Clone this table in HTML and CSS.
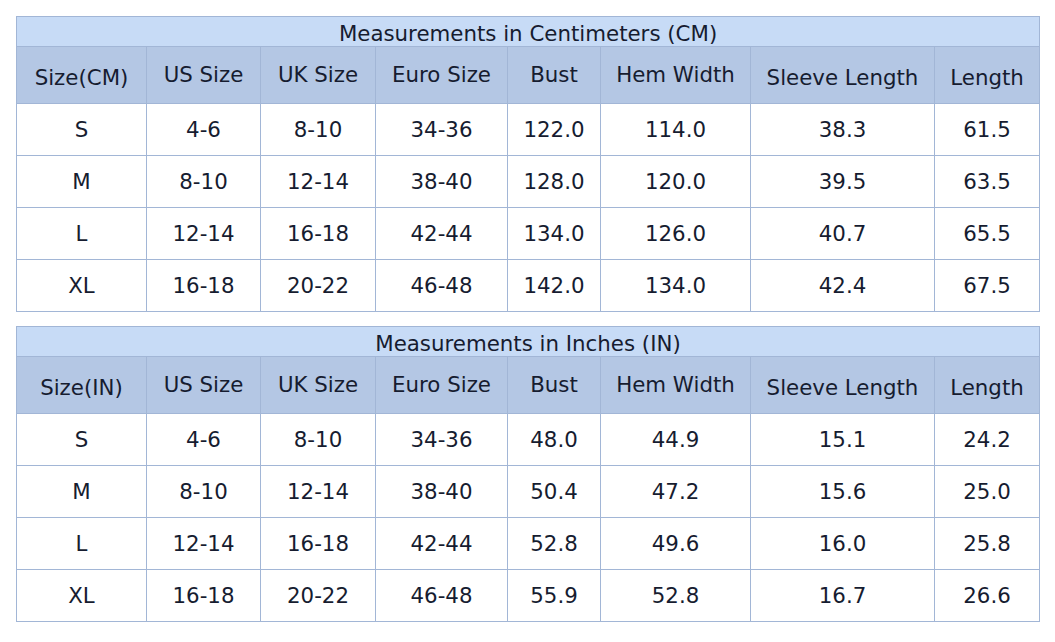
FILE: index.html
```html
<!DOCTYPE html>
<html>
<head>
<meta charset="utf-8">
<link rel="stylesheet" href="styles.css">
</head>
<body>
<table class="size-table">
  <colgroup>
    <col class="c1"><col class="c2"><col class="c3"><col class="c4"><col class="c5"><col class="c6"><col class="c7"><col class="c8">
  </colgroup>
  <tr class="title"><td colspan="8">Measurements in Centimeters (CM)</td></tr>
  <tr class="head">
    <th class="low">Size(CM)</th><th>US Size</th><th>UK Size</th><th>Euro Size</th><th>Bust</th><th>Hem Width</th><th class="low">Sleeve Length</th><th class="low">Length</th>
  </tr>
  <tr><td>S</td><td>4-6</td><td>8-10</td><td>34-36</td><td>122.0</td><td>114.0</td><td>38.3</td><td>61.5</td></tr>
  <tr><td>M</td><td>8-10</td><td>12-14</td><td>38-40</td><td>128.0</td><td>120.0</td><td>39.5</td><td>63.5</td></tr>
  <tr><td>L</td><td>12-14</td><td>16-18</td><td>42-44</td><td>134.0</td><td>126.0</td><td>40.7</td><td>65.5</td></tr>
  <tr><td>XL</td><td>16-18</td><td>20-22</td><td>46-48</td><td>142.0</td><td>134.0</td><td>42.4</td><td>67.5</td></tr>
</table>
<table class="size-table second">
  <colgroup>
    <col class="c1"><col class="c2"><col class="c3"><col class="c4"><col class="c5"><col class="c6"><col class="c7"><col class="c8">
  </colgroup>
  <tr class="title"><td colspan="8">Measurements in Inches (IN)</td></tr>
  <tr class="head">
    <th class="low">Size(IN)</th><th>US Size</th><th>UK Size</th><th>Euro Size</th><th>Bust</th><th>Hem Width</th><th class="low">Sleeve Length</th><th class="low">Length</th>
  </tr>
  <tr><td>S</td><td>4-6</td><td>8-10</td><td>34-36</td><td>48.0</td><td>44.9</td><td>15.1</td><td>24.2</td></tr>
  <tr><td>M</td><td>8-10</td><td>12-14</td><td>38-40</td><td>50.4</td><td>47.2</td><td>15.6</td><td>25.0</td></tr>
  <tr><td>L</td><td>12-14</td><td>16-18</td><td>42-44</td><td>52.8</td><td>49.6</td><td>16.0</td><td>25.8</td></tr>
  <tr><td>XL</td><td>16-18</td><td>20-22</td><td>46-48</td><td>55.9</td><td>52.8</td><td>16.7</td><td>26.6</td></tr>
</table>
</body>
</html>
```
FILE: styles.css
```css
html, body {
  margin: 0;
  padding: 0;
  background: #ffffff;
}
body {
  padding: 16px;
  font-family: "DejaVu Sans", Verdana, sans-serif;
  color: #161c30;
}
.size-table {
  width: 1023px;
  table-layout: fixed;
  border-collapse: collapse;
  font-size: 21.33px;
}
.size-table.second {
  margin-top: 14px;
}
.c1 { width: 130px; }
.c2 { width: 114px; }
.c3 { width: 115px; }
.c4 { width: 132px; }
.c5 { width: 93px; }
.c6 { width: 150px; }
.c7 { width: 184px; }
.c8 { width: 105px; }
.size-table td, .size-table th {
  border: 1px solid #a2b6d6;
  text-align: center;
  vertical-align: middle;
  padding: 0;
  font-weight: normal;
  line-height: 25px;
}
.size-table tr { height: 52px; }
.size-table tr.title { height: 30px; }
.size-table tr.title td {
  background: #c7dbf6;
  line-height: 24px;
  padding-top: 4px;
}
.size-table tr.head { height: 57px; }
.size-table tr.head th {
  background: #b4c7e4;
  padding-bottom: 2px;
}
.size-table tr.head th.low {
  padding-top: 4px;
  padding-bottom: 0;
}
```
